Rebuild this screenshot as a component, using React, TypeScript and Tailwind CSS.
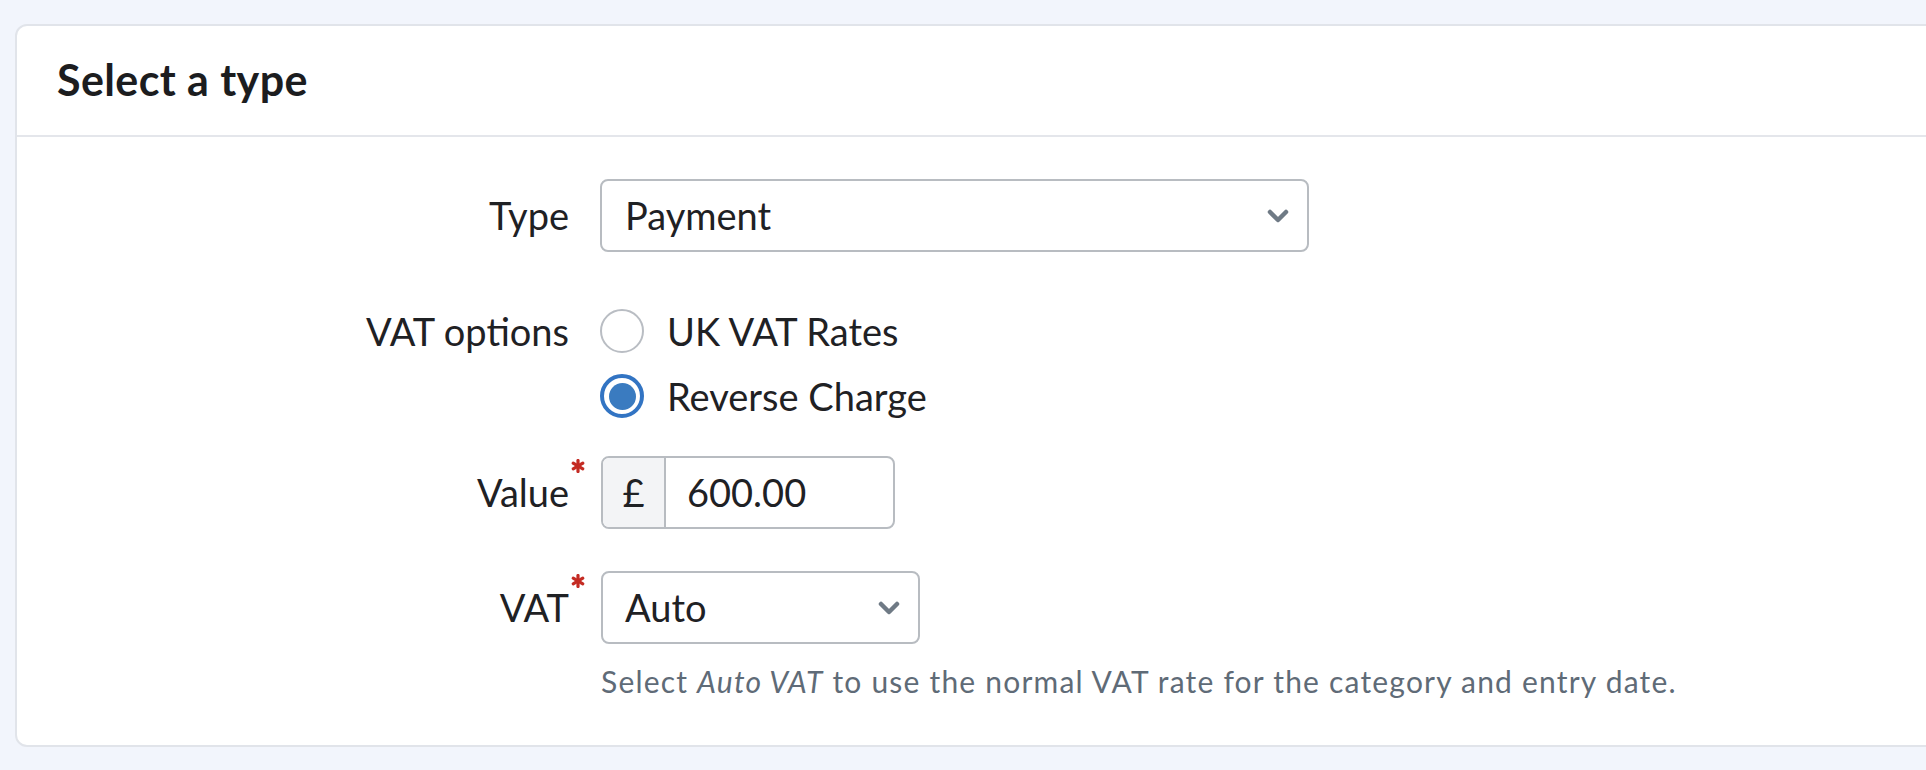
const Chevron = () => (
  <svg width="22" height="14" viewBox="0 0 22 14" fill="none">
    <path
      d="M3 3 L11 11 L19 3"
      stroke="#6f7a85"
      strokeWidth="4.5"
      strokeLinecap="round"
      strokeLinejoin="round"
    />
  </svg>
);

const Required = () => (
  <svg
    className="absolute -right-[16px] -top-[5px]"
    width="14"
    height="14"
    viewBox="0 0 14 14"
    fill="none"
  >
    <g stroke="#c42b23" strokeWidth="3.2" strokeLinecap="round">
      <path d="M7 1.5 L7 12.5" />
      <path d="M2.2 4.2 L11.8 9.8" />
      <path d="M2.2 9.8 L11.8 4.2" />
    </g>
  </svg>
);

const Radio = ({ checked, label }: { checked?: boolean; label: string }) => (
  <div className="flex h-[44px] items-center gap-[23px]">
    {checked ? (
      <span className="flex h-[44px] w-[44px] items-center justify-center rounded-full border-[4px] border-[#3274c3]">
        <span className="h-[27px] w-[27px] rounded-full bg-[#3a7bc0]" />
      </span>
    ) : (
      <span className="h-[44px] w-[44px] rounded-full border-2 border-[#b9bdc3] bg-white" />
    )}
    <span>{label}</span>
  </div>
);

const App = () => {
  return (
    <div className="h-[770px] w-[1926px] overflow-hidden bg-[#f2f5fc] pl-[15px] pt-[24px] font-['Lato',sans-serif] text-[38px] text-[#1f2124]">
      <div className="w-[2000px] rounded-[12px] border-2 border-[#e1e4ea] bg-white">
        <div className="flex h-[111px] items-center border-b-2 border-[#e4e6eb] pl-[40px]">
          <h1 className="text-[43px] font-bold tracking-[0.4px] text-[#1c1d1f]">Select a type</h1>
        </div>

        <div className="pb-[46px] pt-[42px]">
          <div className="flex gap-[31px]">
            <div className="flex h-[73px] w-[552px] items-center justify-end">Type</div>
            <div className="flex h-[73px] w-[709px] items-center justify-between rounded-[8px] border-2 border-[#b8bcc1] pl-[23px] pr-[18px]">
              <span>Payment</span>
              <Chevron />
            </div>
          </div>

          <div className="mt-[57px] flex gap-[31px]">
            <div className="flex h-[44px] w-[552px] items-center justify-end">VAT options</div>
            <div className="flex flex-col gap-[21px]">
              <Radio label="UK VAT Rates" />
              <Radio checked label="Reverse Charge" />
            </div>
          </div>

          <div className="mt-[38px] flex gap-[32px]">
            <div className="flex h-[73px] w-[552px] items-center justify-end">
              <span className="relative">
                Value
                <Required />
              </span>
            </div>
            <div className="flex h-[73px] w-[294px] overflow-hidden rounded-[8px] border-2 border-[#b8bcc1]">
              <div className="flex w-[63px] items-center justify-center border-r-2 border-[#b8bcc1] bg-[#f3f4f6]">
                £
              </div>
              <div className="flex items-center pl-[21px]">600.00</div>
            </div>
          </div>

          <div className="mt-[42px] flex gap-[32px]">
            <div className="flex h-[73px] w-[552px] items-center justify-end">
              <span className="relative">
                VAT
                <Required />
              </span>
            </div>
            <div>
              <div className="flex h-[73px] w-[319px] items-center justify-between rounded-[8px] border-2 border-[#b8bcc1] pl-[22px] pr-[18px]">
                <span>Auto</span>
                <Chevron />
              </div>
              <p className="mt-[19px] whitespace-nowrap text-[30px] leading-[36px] tracking-[1.2px] text-[#5f6b77]">
                Select <em>Auto VAT</em> to use the normal VAT rate for the category and entry date.
              </p>
            </div>
          </div>
        </div>
      </div>
    </div>
  );
};

export default App;
